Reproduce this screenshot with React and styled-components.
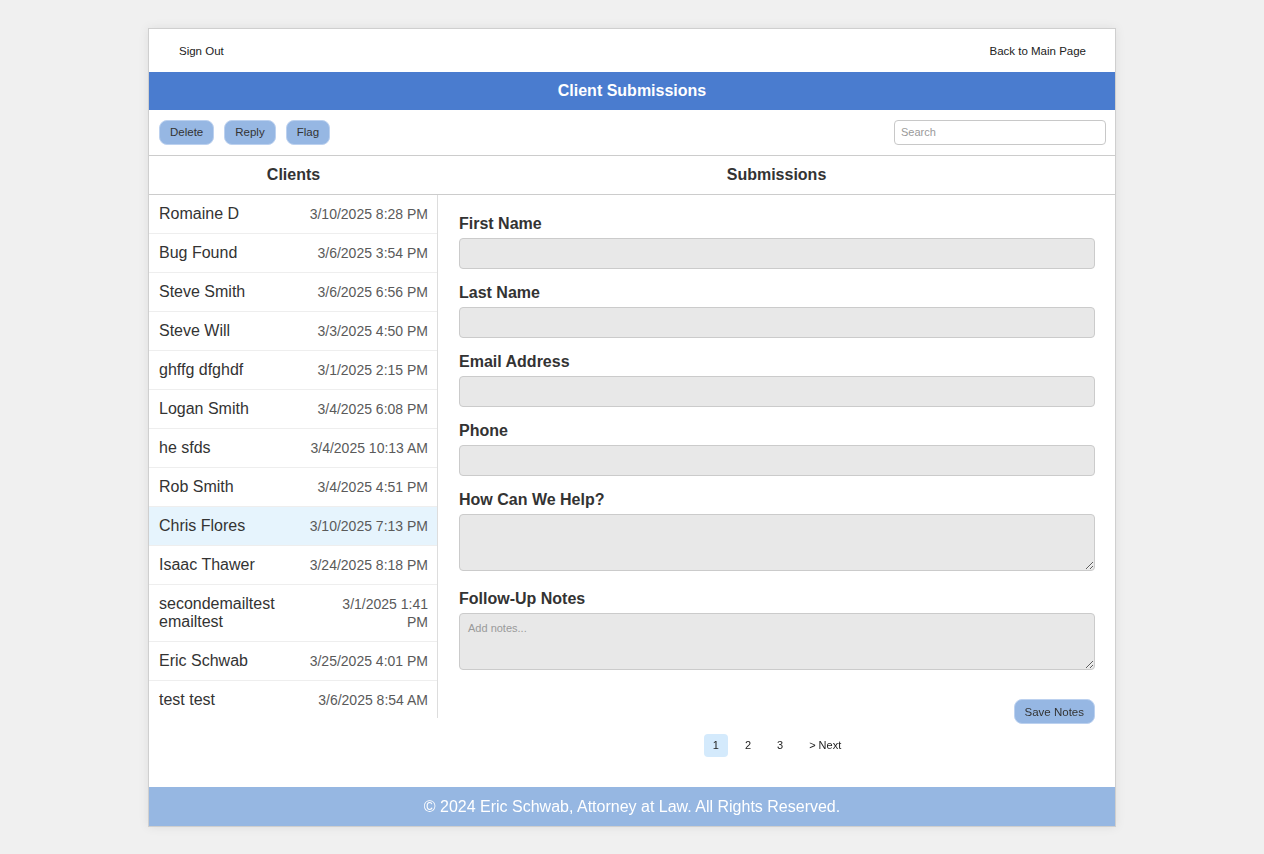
import React from "react";
import styled, { createGlobalStyle } from "styled-components";

const Global = createGlobalStyle`
  html, body { margin: 0; padding: 0; background: #f0f0f0; }
  body { font-family: "Liberation Sans", Arial, Helvetica, sans-serif; color: #333; }
  * { box-sizing: border-box; }
`;

const Page = styled.div`
  padding: 28px 0 28px;
`;

const Container = styled.div`
  width: 968px;
  margin: 0 auto;
  background: #fff;
  border: 1px solid #cfcfcf;
  box-shadow: 0 0 10px rgba(0, 0, 0, 0.08);
  display: flex;
  flex-direction: column;
`;

const TopNav = styled.div`
  display: flex;
  justify-content: space-between;
  align-items: center;
  height: 43px;
  padding: 0 29px 0 30px;
`;

const NavLink = styled.a`
  font-size: 11.5px;
  color: #222;
  text-decoration: none;
  cursor: pointer;
`;

const TitleBar = styled.div`
  background: #4a7ccf;
  color: #fff;
  font-weight: bold;
  font-size: 16px;
  text-align: center;
  height: 38px;
  line-height: 38px;
`;

const Toolbar = styled.div`
  display: flex;
  align-items: center;
  justify-content: space-between;
  height: 46px;
  padding: 0 9px 1px 10px;
  border-bottom: 1px solid #ccc;
`;

const ButtonGroup = styled.div`
  display: flex;
  gap: 10px;
`;

const PillButton = styled.button`
  height: 25px;
  padding: 0 10px;
  background: #96b7e3;
  border: 1px solid #bcd1ef;
  border-radius: 8px;
  font-family: inherit;
  font-size: 11.5px;
  color: #333;
  cursor: pointer;
`;

const SearchInput = styled.input`
  width: 212px;
  height: 25px;
  border: 1px solid #c8c8c8;
  border-radius: 4px;
  padding: 0 6px;
  font-family: inherit;
  font-size: 11px;
  color: #333;
  outline: none;
  &::placeholder { color: #9a9a9a; }
`;

const ColumnHeaders = styled.div`
  display: grid;
  grid-template-columns: 289px 1fr;
  border-bottom: 1px solid #ccc;
`;

const ColumnTitle = styled.div`
  text-align: center;
  font-weight: bold;
  font-size: 16px;
  height: 38px;
  line-height: 38px;
  color: #333;
`;

const Main = styled.div`
  display: grid;
  grid-template-columns: 289px 1fr;
  align-items: start;
`;

const ClientList = styled.ul`
  list-style: none;
  margin: 0;
  padding: 0;
  height: 523px;
  overflow-y: auto;
  scrollbar-width: none;
  border-right: 1px solid #ddd;
  &::-webkit-scrollbar { display: none; }
`;

const ClientRow = styled.li`
  display: flex;
  justify-content: space-between;
  align-items: center;
  gap: 10px;
  padding: 10px 9px 10px 10px;
  border-bottom: 1px solid #eee;
  background: ${(p) => (p.$active ? "#e6f4fd" : "#fff")};
  cursor: pointer;
`;

const ClientName = styled.span`
  font-size: 16px;
  color: #333;
  line-height: 18px;
`;

const ClientDate = styled.span`
  font-size: 14px;
  color: #5a5a5a;
  text-align: right;
  line-height: 18px;
`;

const FormPane = styled.div`
  padding: 19px 20px 30px 21px;
  display: flex;
  flex-direction: column;
`;

const Field = styled.div`
  display: flex;
  flex-direction: column;
  margin-bottom: ${(p) => p.$mb || "14px"};
`;

const Label = styled.label`
  font-size: 16px;
  font-weight: bold;
  line-height: 19px;
  color: #333;
  margin-bottom: 5px;
`;

const TextInput = styled.input`
  height: 31px;
  background: #e8e8e8;
  border: 1px solid #cbcbcb;
  border-radius: 4px;
  font-family: inherit;
  font-size: 14px;
  padding: 0 8px;
`;

const TextArea = styled.textarea`
  display: block;
  height: 57px;
  background: #e8e8e8;
  border: 1px solid #cbcbcb;
  border-radius: 4px;
  font-family: inherit;
  font-size: 11px;
  padding: 8px;
  color: #333;
  &::placeholder { color: #9a9a9a; }
`;

const Actions = styled.div`
  display: flex;
  justify-content: flex-end;
  margin-top: 29px;
`;

const Pagination = styled.div`
  display: flex;
  justify-content: center;
  gap: 8px;
  margin-top: 10px;
`;

const PageItem = styled.span`
  height: 23px;
  line-height: 23px;
  padding: 0 9px;
  border-radius: 4px;
  font-size: 11px;
  color: #222;
  background: ${(p) => (p.$active ? "#d4eafc" : "transparent")};
  cursor: pointer;
`;

const Footer = styled.footer`
  background: #96b7e2;
  color: #fff;
  text-align: center;
  font-size: 16px;
  height: 39px;
  line-height: 39px;
`;

const clients = [
  ["Romaine D", "3/10/2025 8:28 PM"],
  ["Bug Found", "3/6/2025 3:54 PM"],
  ["Steve Smith", "3/6/2025 6:56 PM"],
  ["Steve Will", "3/3/2025 4:50 PM"],
  ["ghffg dfghdf", "3/1/2025 2:15 PM"],
  ["Logan Smith", "3/4/2025 6:08 PM"],
  ["he sfds", "3/4/2025 10:13 AM"],
  ["Rob Smith", "3/4/2025 4:51 PM"],
  ["Chris Flores", "3/10/2025 7:13 PM", true],
  ["Isaac Thawer", "3/24/2025 8:18 PM"],
  ["secondemailtest emailtest", "3/1/2025 1:41 PM"],
  ["Eric Schwab", "3/25/2025 4:01 PM"],
  ["test test", "3/6/2025 8:54 AM"],
];

export default function App() {
  return (
    <Page>
      <Global />
      <Container>
        <TopNav>
          <NavLink>Sign Out</NavLink>
          <NavLink>Back to Main Page</NavLink>
        </TopNav>
        <TitleBar>Client Submissions</TitleBar>
        <Toolbar>
          <ButtonGroup>
            <PillButton>Delete</PillButton>
            <PillButton>Reply</PillButton>
            <PillButton>Flag</PillButton>
          </ButtonGroup>
          <SearchInput placeholder="Search" />
        </Toolbar>
        <ColumnHeaders>
          <ColumnTitle>Clients</ColumnTitle>
          <ColumnTitle>Submissions</ColumnTitle>
        </ColumnHeaders>
        <Main>
          <ClientList>
            {clients.map(([name, date, active]) => (
              <ClientRow key={name} $active={active}>
                <ClientName>{name}</ClientName>
                <ClientDate>{date}</ClientDate>
              </ClientRow>
            ))}
          </ClientList>
          <FormPane>
            <Field>
              <Label>First Name</Label>
              <TextInput />
            </Field>
            <Field>
              <Label>Last Name</Label>
              <TextInput />
            </Field>
            <Field>
              <Label>Email Address</Label>
              <TextInput />
            </Field>
            <Field>
              <Label>Phone</Label>
              <TextInput />
            </Field>
            <Field $mb="18px">
              <Label>How Can We Help?</Label>
              <TextArea />
            </Field>
            <Field $mb="0">
              <Label>Follow-Up Notes</Label>
              <TextArea placeholder="Add notes..." />
            </Field>
            <Actions>
              <PillButton>Save Notes</PillButton>
            </Actions>
            <Pagination>
              <PageItem $active>1</PageItem>
              <PageItem>2</PageItem>
              <PageItem>3</PageItem>
              <PageItem>&gt; Next</PageItem>
            </Pagination>
          </FormPane>
        </Main>
        <Footer>© 2024 Eric Schwab, Attorney at Law. All Rights Reserved.</Footer>
      </Container>
    </Page>
  );
}
